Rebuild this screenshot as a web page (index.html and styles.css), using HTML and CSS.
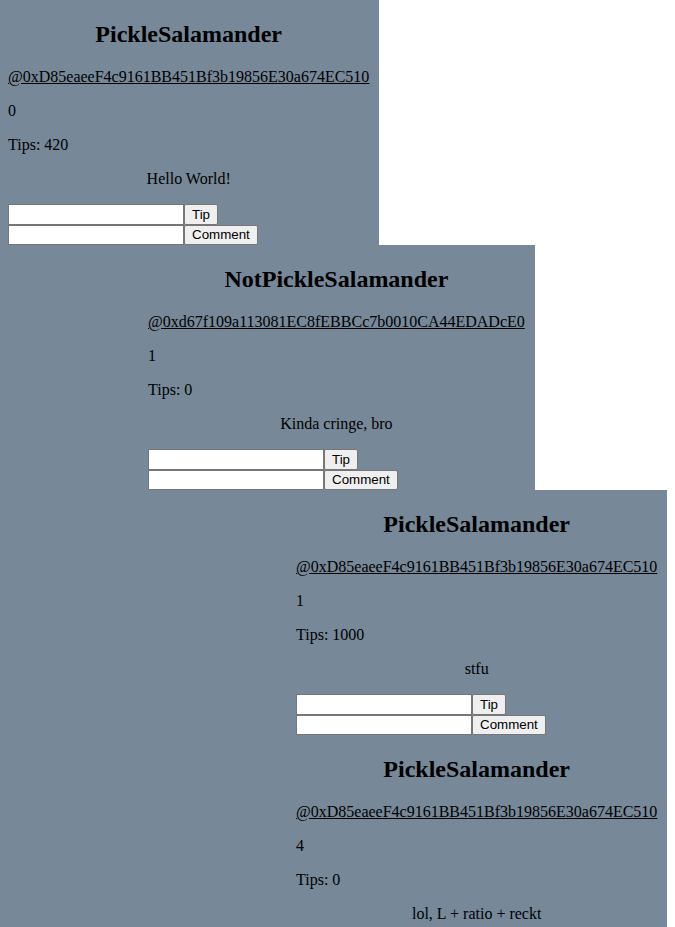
FILE: index.html
```html
<!DOCTYPE html>
<html>
<head>
<meta charset="utf-8">
<link rel="stylesheet" href="styles.css">
</head>
<body>
<div class="feed">
  <div class="post level-0">
    <h2 class="author">PickleSalamander</h2>
    <p><a class="address" href="#">@0xD85eaeeF4c9161BB451Bf3b19856E30a674EC510</a></p>
    <p>0</p>
    <p>Tips: 420</p>
    <p class="message">Hello World!</p>
    <div class="action"><input type="text"><button>Tip</button></div>
    <div class="action"><input type="text"><button>Comment</button></div>
  </div>
  <div class="post level-1">
    <h2 class="author">NotPickleSalamander</h2>
    <p><a class="address" href="#">@0xd67f109a113081EC8fEBBCc7b0010CA44EDADcE0</a></p>
    <p>1</p>
    <p>Tips: 0</p>
    <p class="message">Kinda cringe, bro</p>
    <div class="action"><input type="text"><button>Tip</button></div>
    <div class="action"><input type="text"><button>Comment</button></div>
  </div>
  <div class="post level-2">
    <h2 class="author">PickleSalamander</h2>
    <p><a class="address" href="#">@0xD85eaeeF4c9161BB451Bf3b19856E30a674EC510</a></p>
    <p>1</p>
    <p>Tips: 1000</p>
    <p class="message">stfu</p>
    <div class="action"><input type="text"><button>Tip</button></div>
    <div class="action"><input type="text"><button>Comment</button></div>
  </div>
  <div class="post level-2">
    <h2 class="author">PickleSalamander</h2>
    <p><a class="address" href="#">@0xD85eaeeF4c9161BB451Bf3b19856E30a674EC510</a></p>
    <p>4</p>
    <p>Tips: 0</p>
    <p class="message">lol, L + ratio + reckt</p>
    <div class="action"><input type="text"><button>Tip</button></div>
    <div class="action"><input type="text"><button>Comment</button></div>
  </div>
</div>
</body>
</html>
```
FILE: styles.css
```css
html, body {
  margin: 0;
  padding: 0;
  background: #ffffff;
}
body {
  font-family: "Liberation Serif", "Times New Roman", serif;
  font-size: 16px;
  color: #000;
}
.feed {
  display: flex;
  flex-direction: column;
  align-items: flex-start;
}
.post {
  display: flow-root;
  background: #778899;
  padding-right: 10px;
}
.level-0 { padding-left: 8px; }
.level-1 { padding-left: 148px; }
.level-2 { padding-left: 296px; }
.author {
  font-size: 24px;
  line-height: 28px;
  font-weight: bold;
  text-align: center;
  margin: 20px 0;
}
.post p {
  margin: 16px 0;
  line-height: 18px;
}
.address {
  color: #000;
  text-decoration: underline;
}
.post p.message {
  text-align: center;
}
.action {
  display: flex;
  align-items: stretch;
}
.action input {
  box-sizing: border-box;
  font-family: "Liberation Sans", Arial, sans-serif;
  font-size: 13.333px;
  width: 176px;
  height: 20.5px;
  padding: 1px 2px;
  border: 1px solid #767676;
  background: #fff;
  margin: 0;
}
.action button {
  font-family: "Liberation Sans", Arial, sans-serif;
  font-size: 13.333px;
  padding: 1px 7px;
  margin: 0;
  border: 1px solid #767676;
  border-radius: 2px;
  background: #efefef;
  color: #000;
}
```
